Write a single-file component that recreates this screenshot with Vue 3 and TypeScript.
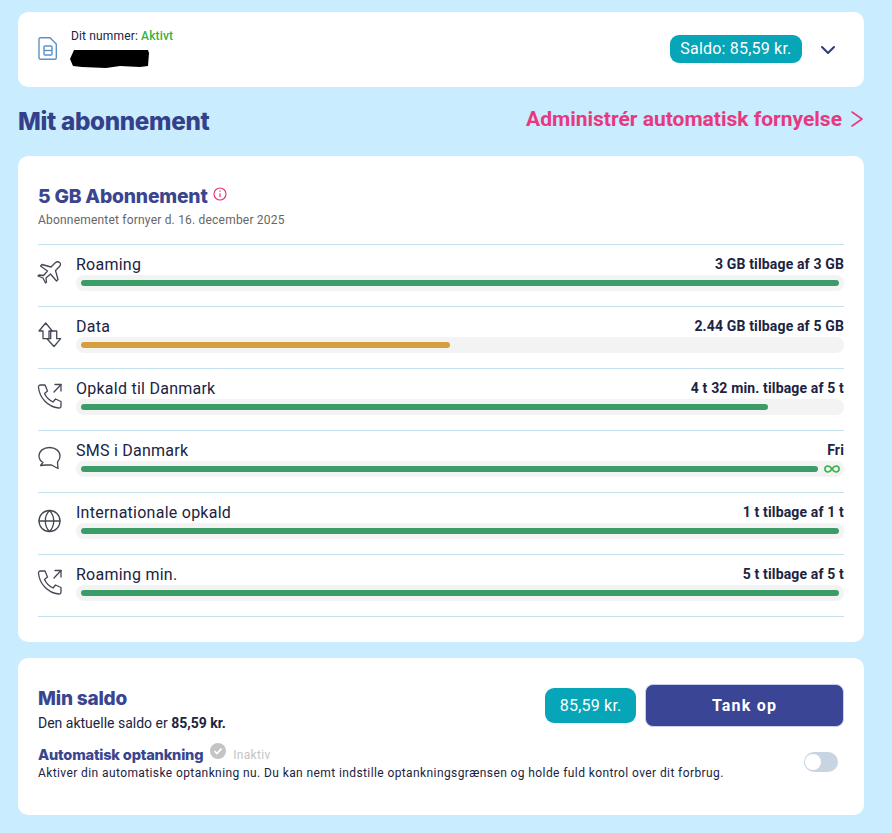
<template>
  <div class="page">
    <section class="card number-card">
      <svg class="sim" width="20" height="25" viewBox="0 0 20 25" fill="none" stroke="#5b93c7" stroke-width="1.4" stroke-linejoin="round">
        <path d="M2.500 1.700h9.500l6.300 6.300V21.800a1.500 1.500 0 0 1-1.500 1.500H2.500A1.500 1.500 0 0 1 1 21.800V3.200A1.500 1.500 0 0 1 2.500 1.700z" />
        <rect x="6" y="10" width="8" height="9" rx="1" />
        <path d="M6 14.500h8" />
      </svg>
      <div class="number-info">
        <div class="number-label">Dit nummer: <span class="active">Aktivt</span></div>
        <svg class="redacted" width="80" height="20" viewBox="0 0 80 20">
          <path d="M4 1h74l1 3-1 13-8 1-20-1-14 2-24-1-9-1-3-7z" fill="#000" />
        </svg>
      </div>
      <div class="saldo-pill">Saldo: 85,59 kr.</div>
      <svg class="chevron" width="16" height="10" viewBox="0 0 16 10" fill="none" stroke="#2d3a7c" stroke-width="2" stroke-linecap="round" stroke-linejoin="round">
        <path d="M2 2l6 6 6-6" />
      </svg>
    </section>

    <header class="section-head">
      <h1>Mit abonnement</h1>
      <a class="renew">
        Administrér automatisk fornyelse
        <svg width="14" height="18" viewBox="0 0 14 18" fill="none" stroke="#e8387f" stroke-width="1.6" stroke-linecap="round" stroke-linejoin="round">
          <path d="M2 2l10 7-10 7" />
        </svg>
      </a>
    </header>

    <section class="card plan-card">
      <div class="plan-title">
        <h2>5 GB Abonnement</h2>
        <svg width="14" height="14" viewBox="0 0 14 14" fill="none" stroke="#e8387f" stroke-width="1.2">
          <circle cx="7" cy="7" r="6" />
          <path d="M7 6.200v4M7 3.600v1.200" />
        </svg>
      </div>
      <p class="renews">Abonnementet fornyer d. 16. december 2025</p>

      <ul class="usage">
        <li v-for="row in rows" :key="row.label" class="usage-row">
          <div class="usage-icon">
            <svg width="28" height="28" viewBox="0 0 28 28" fill="none" stroke="#444854" stroke-width="1.3" stroke-linejoin="round" stroke-linecap="round">
              <path v-for="d in icons[row.icon]" :key="d" :d="d" />
            </svg>
          </div>
          <div class="usage-main">
            <div class="usage-text">
              <span class="usage-label">{{ row.label }}</span>
              <span class="usage-value">{{ row.value }}</span>
            </div>
            <div class="track">
              <div class="fill" :style="{ width: row.width + 'px', background: row.color }"></div>
              <svg v-if="row.unlimited" class="infinity" width="16" height="8" viewBox="0 0 16 8" fill="none" stroke="#2fb344" stroke-width="1.6">
                <path d="M8 4C6.500 1.800 5.400 1 3.900 1a3 3 0 0 0 0 6C5.400 7 6.500 6.200 8 4c1.500-2.200 2.600-3 4.100-3a3 3 0 0 1 0 6C10.600 7 9.500 6.200 8 4z" />
              </svg>
            </div>
          </div>
        </li>
      </ul>
    </section>

    <section class="card saldo-card">
      <div class="saldo-top">
        <div>
          <h2 class="saldo-title">Min saldo</h2>
          <p class="saldo-text">Den aktuelle saldo er <b>85,59 kr.</b></p>
        </div>
        <div class="saldo-actions">
          <div class="saldo-amount">85,59 kr.</div>
          <button class="topup">Tank op</button>
        </div>
      </div>
      <div class="auto">
        <div class="auto-text">
          <div class="auto-head">
            <h3>Automatisk optankning</h3>
            <svg width="16" height="16" viewBox="0 0 16 16">
              <circle cx="8" cy="8" r="8" fill="#c4c4c4" />
              <path d="M4.400 8.200l2.500 2.400 4.700-5" fill="none" stroke="#fff" stroke-width="1.700" />
            </svg>
            <span class="inactive">Inaktiv</span>
          </div>
          <p>Aktiver din automatiske optankning nu. Du kan nemt indstille optankningsgrænsen og holde fuld kontrol over dit forbrug.</p>
        </div>
        <div class="toggle"><span class="knob"></span></div>
      </div>
    </section>
  </div>
</template>

<script setup lang="ts">
type IconName = 'plane' | 'data' | 'phone' | 'chat' | 'globe';

interface UsageRow {
  label: string;
  value: string;
  icon: IconName;
  width: number;
  color: string;
  unlimited?: boolean;
}

const green = '#3c9c68';
const amber = '#d69e3c';

const phone = [
  'M3.500 3H8l2.500 6-3 2.500c1.500 3.500 4.500 6.500 8.500 8.500l2.500-3 5.500 2.500V24c0 1.300-1 2.200-2.300 2C11 25 2.500 16 1.500 5.300 1.400 4 2.200 3 3.500 3z',
  'M24 2.500L17 10',
  'M18 2.500h6V9',
];

const icons: Record<IconName, string[]> = {
  plane: [
    'M22.500 4.500c-1.500-1.200-3-.8-4.500.5L14 9 5 6.500 3.500 8l7 5-4 4.500-4.500-.5-1 1 5 2 2.500 5 1-1-.5-4 4.500-4 6 7 1.500-1.500-2.500-9 4-4c1.300-1.500 1.500-3 0-4z',
  ],
  data: [
    'M8.700 3L2 11h4v7.700h6V11h3.300z',
    'M14 11h5.700v7.700h4L17 26.500l-7-7.800h3.700V11',
  ],
  phone,
  chat: [
    'M6 18.500C3.500 17 2 14.500 2 12 2 7 6.500 3.500 12.500 3.500S23 7 23 12c0 2.500-1 4.500-2.500 6l.5 6.500-6.500-3.500H9l-5.500.5z',
  ],
  globe: [
    'M12.500 4.500a10.500 10.500 0 1 0 0 21 10.500 10.500 0 0 0 0-21z',
    'M2 15h21',
    'M12.500 4.500c-3 3-4.200 6.700-4.200 10.500s1.200 7.500 4.200 10.500c3-3 4.200-6.700 4.200-10.500s-1.200-7.500-4.200-10.500z',
  ],
};

const rows: UsageRow[] = [
  { label: 'Roaming', value: '3 GB tilbage af 3 GB', icon: 'plane', width: 758, color: green },
  { label: 'Data', value: '2.44 GB tilbage af 5 GB', icon: 'data', width: 369, color: amber },
  { label: 'Opkald til Danmark', value: '4 t 32 min. tilbage af 5 t', icon: 'phone', width: 687, color: green },
  { label: 'SMS i Danmark', value: 'Fri', icon: 'chat', width: 737, color: green, unlimited: true },
  { label: 'Internationale opkald', value: '1 t tilbage af 1 t', icon: 'globe', width: 758, color: green },
  { label: 'Roaming min.', value: '5 t tilbage af 5 t', icon: 'phone', width: 758, color: green },
];
</script>

<style>
html,
body {
  background: #c9ecff;
}
</style>

<style scoped>
.page {
  box-sizing: border-box;
  width: 892px;
  height: 833px;
  padding: 12px 28px 0 18px;
  background: #c9ecff;
  font-family: Roboto, "Liberation Sans", sans-serif;
  color: #20233f;
  overflow: hidden;
}

.card {
  background: #fff;
  border-radius: 10px;
}

h1,
h2,
h3,
p,
ul {
  margin: 0;
  padding: 0;
}

.number-card {
  display: flex;
  align-items: center;
  height: 75px;
  padding: 0 28px 0 20px;
  box-sizing: border-box;
}

.sim {
  margin-right: 13px;
  margin-bottom: 2px;
}

.number-info {
  flex: 1;
  display: flex;
  flex-direction: column;
  align-self: flex-start;
  padding-top: 17px;
}

.number-label {
  font-size: 12px;
  line-height: 14px;
  letter-spacing: 0.15px;
}

.active {
  color: #2fb344;
  font-weight: 500;
}

.redacted {
  display: block;
  margin-top: 6px;
  margin-left: -1px;
}

.saldo-pill {
  background: #06a5b7;
  color: #fff;
  font-size: 16px;
  line-height: 28px;
  letter-spacing: 0.2px;
  padding: 0 10.5px;
  border-radius: 9px;
  margin-right: 18px;
  margin-bottom: 2px;
}

.section-head {
  display: flex;
  align-items: center;
  justify-content: space-between;
  height: 69px;
}

h1 {
  font-family: Inter, sans-serif;
  font-weight: 800;
  font-size: 24.2px;
  letter-spacing: -0.3px;
  color: #33408a;
  margin-top: -1px;
}

.renew {
  display: flex;
  align-items: center;
  gap: 8px;
  color: #e8387f;
  font-size: 21px;
  font-weight: 700;
  margin-top: -6px;
}

.plan-card {
  height: 486px;
  padding: 28px 20px 0;
  box-sizing: border-box;
}

.plan-title {
  display: flex;
  align-items: flex-start;
  gap: 5px;
}

h2 {
  font-family: Inter, sans-serif;
  font-weight: 800;
  font-size: 19.3px;
  line-height: 24px;
  letter-spacing: -0.2px;
  color: #3a4590;
}

.plan-title svg {
  margin-top: 3px;
}

.renews {
  margin-top: 5px;
  font-size: 12px;
  line-height: 14px;
  color: #666;
  letter-spacing: 0.2px;
}

.usage {
  list-style: none;
  margin-top: 17px;
  border-top: 1px solid #c5e0ec;
}

.usage-row {
  display: flex;
  height: 62px;
  box-sizing: border-box;
  border-bottom: 1px solid #c5e0ec;
}

.usage-icon {
  flex: none;
  width: 38px;
  padding-top: 13px;
  margin-left: -1px;
  margin-right: 1px;
}

.usage-main {
  flex: 1;
  min-width: 0;
  padding-top: 9px;
}

.usage-text {
  display: flex;
  justify-content: space-between;
  align-items: center;
  height: 21px;
}

.usage-label {
  font-size: 16px;
  letter-spacing: 0.25px;
}

.usage-value {
  font-size: 14px;
  font-weight: 700;
  letter-spacing: 0.15px;
  margin-top: -1px;
}

.track {
  position: relative;
  height: 16px;
  padding: 5px;
  box-sizing: border-box;
  border-radius: 8px;
  background: #f3f3f3;
}

.fill {
  height: 6px;
  border-radius: 3px;
}

.infinity {
  position: absolute;
  right: 4px;
  top: 4px;
}

.saldo-card {
  margin-top: 16px;
  height: 157px;
  padding: 26px 20px 0;
  box-sizing: border-box;
}

.saldo-top {
  display: flex;
  justify-content: space-between;
  align-items: flex-start;
}

.saldo-title {
  font-size: 19px;
  line-height: 30px;
}

.saldo-text {
  font-size: 14px;
  line-height: 18px;
}

.saldo-actions {
  display: flex;
  align-items: center;
  gap: 9px;
}

.saldo-amount {
  background: #06a5b7;
  color: #fff;
  font-size: 16px;
  line-height: 35px;
  letter-spacing: 0.2px;
  padding: 0 14.5px;
  border-radius: 9px;
}

.topup {
  width: 199px;
  height: 43px;
  border: 1px solid #c8d0f0;
  border-radius: 8px;
  background: #3a4595;
  color: #fff;
  font-family: inherit;
  font-size: 16px;
  font-weight: 700;
  letter-spacing: 1.2px;
}

.auto {
  display: flex;
  justify-content: space-between;
  align-items: flex-start;
  margin-top: 12px;
}

.auto-head {
  display: flex;
  align-items: center;
  gap: 7px;
  height: 22px;
}

.auto-head svg {
  align-self: flex-start;
  margin-top: -1px;
}

h3 {
  font-family: Inter, sans-serif;
  font-weight: 800;
  font-size: 14.6px;
  line-height: 18px;
  letter-spacing: -0.2px;
  color: #3a4590;
}

.inactive {
  color: #c4c4c4;
  font-size: 12px;
  letter-spacing: 0.3px;
}

.auto-text p {
  font-size: 12px;
  line-height: 14px;
  letter-spacing: 0.4px;
}

.toggle {
  position: relative;
  flex: none;
  width: 34px;
  height: 20px;
  margin-top: 8px;
  margin-right: 6px;
  border-radius: 10px;
  background: #c8d4e2;
}

.knob {
  position: absolute;
  left: 1px;
  top: 2px;
  width: 16px;
  height: 16px;
  border-radius: 50%;
  background: #fff;
}
</style>
